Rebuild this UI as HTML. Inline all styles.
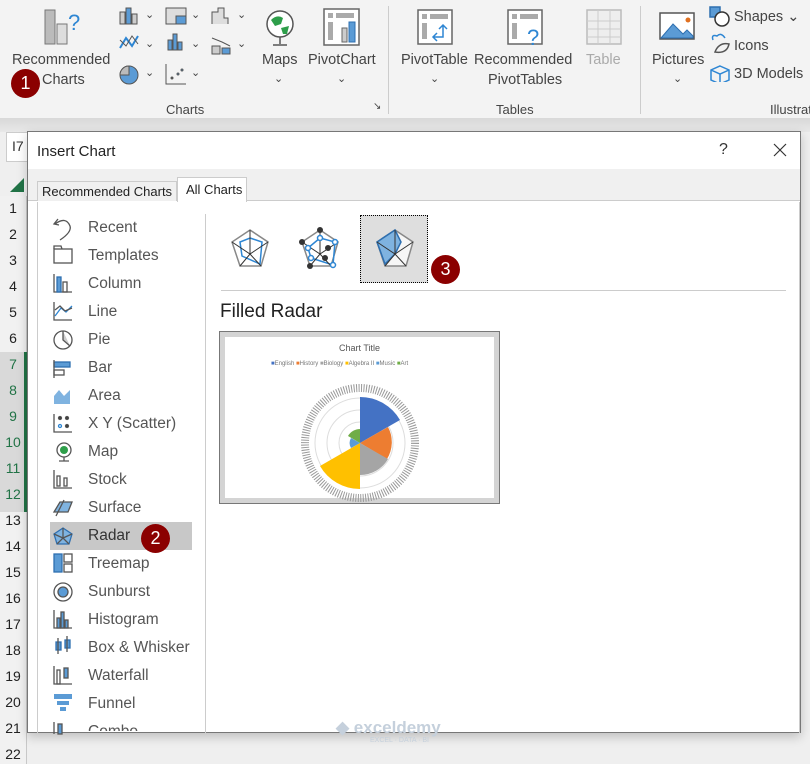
<!DOCTYPE html>
<html><head><meta charset="utf-8"><style>
*{margin:0;padding:0;box-sizing:border-box}
body{width:810px;height:764px;overflow:hidden;background:#efefef;font-family:"Segoe UI","Liberation Sans",sans-serif;position:relative;color:#333}
.a{position:absolute}
.rib{left:0;top:0;width:810px;height:120px;background:#f3f3f3}
.t{font-size:14.5px;color:#444;white-space:nowrap}
.badge{position:absolute;width:29px;height:29px;border-radius:50%;background:#8b0000;color:#fff;font-size:18px;text-align:center;line-height:29px}
.rows{left:0;top:196px;width:27px;height:568px;background:#f1f1f1;border-right:1px solid #c8c8c8}
.rn{position:absolute;left:0;width:26px;text-align:center;font-size:14px;color:#222}
.li{position:absolute;left:88px;font-size:15.5px;color:#555}
</style></head><body>
<div class="a rib"></div>
<div class="a" style="left:0;top:118px;width:810px;height:14px;background:linear-gradient(#d8d8d8,#e8e8e8)"></div>
<svg class="a" style="left:40px;top:8px" width="50" height="40"><rect x="5" y="2" width="10" height="34" fill="#bbb" stroke="#777"/><rect x="17" y="16" width="10" height="20" fill="#ddd" stroke="#777"/><text x="28" y="22" font-size="22" fill="#2e86d3" font-family="Liberation Sans">?</text></svg>
<div class="a t" style="left:12px;top:52px">Recommended</div>
<div class="a t" style="left:42px;top:72px">Charts</div>
<div class="badge" style="left:11px;top:69px">1</div>
<svg class="a" style="left:118px;top:6px" width="140" height="84" fill="none" stroke="#555">
<rect x="2" y="6" width="5" height="12" fill="#ccc"/><rect x="8" y="2" width="5" height="16" fill="#5b9bd5"/><rect x="14" y="8" width="5" height="10" fill="#ccc"/>
<polyline points="2,42 8,32 14,40 20,30" stroke="#2e86d3" stroke-width="2"/><polyline points="2,34 8,40 14,30 20,38" stroke="#555"/>
<circle cx="11" cy="69" r="9" fill="#5b9bd5"/><path d="M11 60 A9 9 0 0 0 2 69 L11 69Z" fill="#bbb"/>
<rect x="48" y="2" width="20" height="16" fill="#ddd"/><rect x="58" y="10" width="10" height="8" fill="#5b9bd5"/>
<rect x="50" y="34" width="4" height="10" fill="#5b9bd5"/><rect x="55" y="28" width="4" height="16" fill="#5b9bd5"/><rect x="60" y="36" width="4" height="8" fill="#5b9bd5"/>
<path d="M48 58 V78 H68"/><circle cx="54" cy="72" r="1" fill="#555"/><circle cx="60" cy="68" r="1" fill="#5b9bd5"/><circle cx="64" cy="64" r="1" fill="#5b9bd5"/>
<path d="M94 18 V6 H100 V2 H106 V12 H110 V18" fill="#ddd"/>
<rect x="94" y="40" width="8" height="8" fill="#ccc"/><rect x="104" y="42" width="8" height="6" fill="#5b9bd5"/><polyline points="94,32 104,36 112,40"/>
</svg>
<div class="a t" style="left:145px;top:8px;font-size:11px">⌄</div><div class="a t" style="left:191px;top:8px;font-size:11px">⌄</div><div class="a t" style="left:237px;top:8px;font-size:11px">⌄</div>
<div class="a t" style="left:145px;top:37px;font-size:11px">⌄</div><div class="a t" style="left:191px;top:37px;font-size:11px">⌄</div><div class="a t" style="left:237px;top:37px;font-size:11px">⌄</div>
<div class="a t" style="left:145px;top:66px;font-size:11px">⌄</div><div class="a t" style="left:191px;top:66px;font-size:11px">⌄</div>
<svg class="a" style="left:263px;top:8px" width="34" height="40"><circle cx="17" cy="16" r="13" fill="#fff" stroke="#555" stroke-width="1.5"/><path d="M8 12 Q14 6 20 10 L18 16 L12 18Z M18 20 L26 18 L24 26 L20 26Z" fill="#2e9e4a"/><path d="M17 29 V36 M10 37 H24" stroke="#555" stroke-width="1.5"/></svg>
<div class="a t" style="left:262px;top:52px">Maps</div><div class="a t" style="left:274px;top:72px;font-size:11px">⌄</div>
<svg class="a" style="left:323px;top:8px" width="38" height="40"><rect x="1" y="1" width="35" height="36" fill="#fff" stroke="#666" stroke-width="1.5"/><rect x="5" y="5" width="5" height="5" fill="#aaa"/><rect x="13" y="5" width="18" height="5" fill="#aaa"/><rect x="5" y="14" width="5" height="18" fill="#aaa"/><rect x="19" y="20" width="5" height="14" fill="#ccc" stroke="#666"/><rect x="26" y="14" width="6" height="20" fill="#5b9bd5" stroke="#2e6fb0"/></svg>
<div class="a t" style="left:308px;top:52px">PivotChart</div><div class="a t" style="left:337px;top:72px;font-size:11px">⌄</div>
<div class="a t" style="left:166px;top:102px;font-size:13px">Charts</div>
<div class="a t" style="left:373px;top:101px;font-size:10px">↘</div>
<div class="a" style="left:388px;top:6px;width:1px;height:108px;background:#ccc"></div>
<svg class="a" style="left:417px;top:9px" width="38" height="38"><rect x="1" y="1" width="34" height="34" fill="#fff" stroke="#666" stroke-width="1.5"/><rect x="5" y="5" width="5" height="5" fill="#aaa"/><rect x="13" y="5" width="18" height="5" fill="#aaa"/><rect x="5" y="14" width="5" height="16" fill="#aaa"/><path d="M16 28 H26 V16 M22 20 L26 16 L30 20 M20 24 L16 28 L20 32" stroke="#2e86d3" stroke-width="1.5" fill="none"/></svg>
<div class="a t" style="left:401px;top:52px">PivotTable</div><div class="a t" style="left:430px;top:72px;font-size:11px">⌄</div>
<svg class="a" style="left:507px;top:9px" width="40" height="38"><rect x="1" y="1" width="34" height="34" fill="#fff" stroke="#666" stroke-width="1.5"/><rect x="5" y="5" width="5" height="5" fill="#aaa"/><rect x="13" y="5" width="18" height="5" fill="#aaa"/><rect x="5" y="14" width="5" height="16" fill="#aaa"/><text x="20" y="36" font-size="22" fill="#2e86d3" font-family="Liberation Sans">?</text></svg>
<div class="a t" style="left:474px;top:52px">Recommended</div><div class="a t" style="left:488px;top:72px">PivotTables</div>
<svg class="a" style="left:586px;top:9px" width="38" height="36"><rect x="1" y="1" width="34" height="34" fill="#eee" stroke="#bbb" stroke-width="1.5"/><path d="M1 12 H35 M1 20 H35 M1 28 H35 M12 1 V35 M24 1 V35" stroke="#ccc"/></svg>
<div class="a t" style="left:586px;top:52px;color:#aaa">Table</div>
<div class="a t" style="left:496px;top:102px;font-size:13px">Tables</div>
<div class="a" style="left:640px;top:6px;width:1px;height:108px;background:#ccc"></div>
<svg class="a" style="left:659px;top:12px" width="38" height="30"><rect x="1" y="1" width="34" height="26" fill="#fff" stroke="#555" stroke-width="1.5"/><path d="M2 26 L14 12 L24 22 L28 18 L34 24 V26Z" fill="#5b9bd5" stroke="#2e6fb0"/><circle cx="29" cy="8" r="2.5" fill="#e07020"/></svg>
<div class="a t" style="left:652px;top:52px">Pictures</div><div class="a t" style="left:673px;top:72px;font-size:11px">⌄</div>
<svg class="a" style="left:709px;top:6px" width="24" height="76" fill="none" stroke-width="1.5"><rect x="1" y="1" width="10" height="10" fill="#5b9bd5" stroke="#2e6fb0"/><circle cx="13" cy="13" r="7" fill="#fff" stroke="#333"/><path d="M4 34 Q2 28 8 30 Q12 26 16 32" stroke="#2e86d3"/><path d="M6 46 Q10 36 20 38 Q18 48 6 46Z" stroke="#555"/><path d="M11 60 L20 64 V74 L11 78 L2 74 V64Z M2 64 L11 68 L20 64 M11 68 V78" stroke="#2e86d3"/></svg>
<div class="a t" style="left:734px;top:9px">Shapes ⌄</div>
<div class="a t" style="left:734px;top:38px">Icons</div>
<div class="a t" style="left:734px;top:66px">3D Models</div>
<div class="a t" style="left:770px;top:102px;font-size:13px">Illustrat</div>
<div class="a" style="left:6px;top:132px;width:24px;height:30px;background:#fff;border:1px solid #ccc;font-size:14px;padding:5px 0 0 5px">I7</div>
<div class="a" style="left:10px;top:178px;width:0;height:0;border-left:14px solid transparent;border-bottom:14px solid #217346"></div>
<div class="a rows">
<div class="a" style="left:24px;top:156px;width:3px;height:160px;background:#217346"></div>
<div class="a" style="left:0;top:156px;width:24px;height:160px;background:#d9d9d9"></div>
<div class="rn" style="top:4px">1</div><div class="rn" style="top:30px">2</div><div class="rn" style="top:56px">3</div><div class="rn" style="top:82px">4</div><div class="rn" style="top:108px">5</div><div class="rn" style="top:134px">6</div><div class="rn" style="top:160px;color:#217346">7</div><div class="rn" style="top:186px;color:#217346">8</div><div class="rn" style="top:212px;color:#217346">9</div><div class="rn" style="top:238px;color:#217346">10</div><div class="rn" style="top:264px;color:#217346">11</div><div class="rn" style="top:290px;color:#217346">12</div><div class="rn" style="top:316px">13</div><div class="rn" style="top:342px">14</div><div class="rn" style="top:368px">15</div><div class="rn" style="top:394px">16</div><div class="rn" style="top:420px">17</div><div class="rn" style="top:446px">18</div><div class="rn" style="top:472px">19</div><div class="rn" style="top:498px">20</div><div class="rn" style="top:524px">21</div><div class="rn" style="top:550px">22</div>
</div>
<div class="a" style="left:27px;top:131px;width:774px;height:602px;background:#fff;border:1px solid #777;box-shadow:0 4px 10px rgba(0,0,0,.2)">
<div class="a" style="left:9px;top:11px;font-size:15px;color:#222">Insert Chart</div>
<div class="a" style="left:691px;top:9px;font-size:16px;color:#333">?</div>
<svg class="a" style="left:745px;top:11px" width="14" height="14"><path d="M1 1 L13 13 M13 1 L1 13" stroke="#333" stroke-width="1.2"/></svg>
<div class="a" style="left:0;top:37px;width:772px;height:32px;background:#f0f0f0;border-bottom:1px solid #ccc"></div>
<div class="a" style="left:9px;top:49px;width:140px;height:20px;border:1px solid #ccc;border-bottom:none;background:#f0f0f0;font-size:13px;padding:2px 0 0 4px;color:#222">Recommended Charts</div>
<div class="a" style="left:149px;top:45px;width:70px;height:25px;border:1px solid #ccc;border-bottom:none;background:#fff;font-size:13px;padding:4px 0 0 8px;color:#222">All Charts</div>
<div class="a" style="left:9px;top:70px;width:763px;height:531px;border-left:1px solid #ccc;border-right:1px solid #ccc"></div>
<div class="a" style="left:177px;top:82px;width:1px;height:520px;background:#ccc"></div>
</div>
<div class="a" style="left:50px;top:522px;width:142px;height:28px;background:#c8c8c8"></div>
<svg class="a" style="left:52px;top:216px" width="26" height="520" fill="none" stroke="#555" stroke-width="1.3">
<path d="M6 3 L2 8 L7 9 M3 8 Q14 0 18 10 Q20 16 8 24"/>
<rect x="2" y="33" width="18" height="14"/><path d="M2 33 V30 H9 L10 33"/>
<path d="M2 58 V76 H20"/><rect x="5" y="61" width="4" height="15" fill="#5b9bd5" stroke="#2e6fb0"/><rect x="11" y="66" width="4" height="10"/>
<path d="M2 86 V104 H20"/><polyline points="3,100 9,92 14,96 20,90" stroke="#2e86d3"/><polyline points="3,94 8,90 13,95 20,92"/>
<circle cx="11" cy="124" r="9"/><path d="M11 115 V124 L18 130" fill="#ccc"/>
<rect x="2" y="146" width="16" height="5" fill="#5b9bd5" stroke="#2e6fb0"/><rect x="2" y="154" width="10" height="5"/><path d="M2 144 V162"/>
<path d="M2 180 L7 174 L12 180 L18 174 V188 H2Z" fill="#7fb3e0" stroke="none"/>
<path d="M2 198 V216 H20"/><circle cx="8" cy="202" r="1.5" fill="#333"/><circle cx="15" cy="202" r="1.5" fill="#333"/><circle cx="8" cy="210" r="1.5" stroke="#2e86d3"/><circle cx="15" cy="210" r="1.5" fill="#333"/>
<circle cx="12" cy="234" r="7"/><circle cx="12" cy="234" r="4" fill="#2e9e4a" stroke="none"/><path d="M12 241 V245 M7 245 H17"/>
<path d="M2 254 V272 H20"/><rect x="5" y="260" width="3" height="10"/><rect x="12" y="262" width="3" height="8"/>
<path d="M2 296 L8 286 H20 L16 296Z" fill="#7fb3e0"/><path d="M4 300 L12 284"/>
<path d="M11 312 L20 318 L17 328 H5 L2 318Z" fill="#7fb3e0" stroke="#2e6fb0"/><path d="M11 312 V322 M2 318 L11 322 L20 318 M5 328 L11 322 L17 328"/>
<rect x="2" y="338" width="8" height="18" fill="#5b9bd5" stroke="#2e6fb0"/><rect x="12" y="338" width="8" height="8"/><rect x="12" y="348" width="8" height="8"/>
<circle cx="11" cy="376" r="9"/><circle cx="11" cy="376" r="5" fill="#5b9bd5"/>
<path d="M2 394 V412 H20"/><rect x="5" y="402" width="3" height="10" fill="#5b9bd5"/><rect x="9" y="396" width="3" height="16" fill="#5b9bd5"/><rect x="13" y="404" width="3" height="8" fill="#5b9bd5"/>
<rect x="4" y="426" width="5" height="8" fill="#5b9bd5" stroke="#2e6fb0"/><rect x="13" y="424" width="5" height="8" fill="#5b9bd5" stroke="#2e6fb0"/><path d="M6 422 V438 M15 420 V436"/>
<path d="M2 450 V468 H20"/><rect x="5" y="454" width="3" height="14"/><rect x="12" y="452" width="4" height="10" fill="#5b9bd5"/>
<rect x="2" y="478" width="18" height="5" fill="#5b9bd5" stroke="none"/><rect x="5" y="485" width="12" height="4" fill="#5b9bd5" stroke="none"/><rect x="8" y="491" width="6" height="4" fill="#5b9bd5" stroke="none"/>
<path d="M2 506 V518"/><rect x="6" y="508" width="4" height="10" fill="#5b9bd5"/>
</svg>
<div class="li" style="top:219px">Recent</div><div class="li" style="top:247px">Templates</div><div class="li" style="top:275px">Column</div><div class="li" style="top:303px">Line</div><div class="li" style="top:331px">Pie</div><div class="li" style="top:359px">Bar</div><div class="li" style="top:387px">Area</div><div class="li" style="top:415px">X Y (Scatter)</div><div class="li" style="top:443px">Map</div><div class="li" style="top:471px">Stock</div><div class="li" style="top:499px">Surface</div><div class="li" style="top:527px;color:#333">Radar</div><div class="li" style="top:555px">Treemap</div><div class="li" style="top:583px">Sunburst</div><div class="li" style="top:611px">Histogram</div><div class="li" style="top:639px">Box &amp; Whisker</div><div class="li" style="top:667px">Waterfall</div><div class="li" style="top:695px">Funnel</div><div class="li" style="top:723px;height:8px;overflow:hidden">Combo</div>
<div class="badge" style="left:141px;top:524px">2</div>
<div class="a" style="left:360px;top:215px;width:68px;height:68px;background:#dedede;border:1px dotted #000"></div>
<svg class="a" style="left:226px;top:224px" width="210" height="60" fill="none">
<g stroke="#888" stroke-width="1.5"><path d="M24 6 L42 18 L35 42 L14 42 L6 18Z"/></g>
<path d="M24 14 L36 18 L34 40 L16 32 L14 18Z" stroke="#2e86d3" stroke-width="1.5"/>
<g stroke="#333"><path d="M24 6 V30 M6 18 L24 30 L42 18 M14 42 L24 30 L35 42"/></g>
<g transform="translate(70,0)"><path d="M24 6 L42 18 L35 42 L14 42 L6 18Z" stroke="#888" stroke-width="1.5"/><path d="M24 14 L39 18 L37 41 L15 34 L12 24Z" stroke="#2e86d3" stroke-width="1.5"/><path d="M24 6 V30 M6 18 L24 30 L42 18 M14 42 L24 30 L35 42" stroke="#333"/><g fill="#333"><circle cx="24" cy="6" r="3"/><circle cx="6" cy="18" r="3"/><circle cx="14" cy="42" r="3"/><circle cx="32" cy="24" r="3"/><circle cx="29" cy="34" r="3"/></g><g fill="#fff" stroke="#2e86d3" stroke-width="1.5"><circle cx="24" cy="14" r="2.5"/><circle cx="39" cy="18" r="2.5"/><circle cx="37" cy="41" r="2.5"/><circle cx="15" cy="34" r="2.5"/><circle cx="12" cy="24" r="2.5"/></g></g>
<g transform="translate(145,0)"><path d="M24 6 L42 18 L35 42 L14 42 L6 18Z" fill="#f6f6f6" stroke="#888" stroke-width="1.5"/><path d="M24 6 L30 18 L24 30 L14 40 L6 18Z" fill="#7fb3e0" stroke="#2e6fb0" stroke-width="1.5"/><path d="M24 6 V30 M6 18 L24 30 L42 18 M14 42 L24 30 L35 42" stroke="#333"/></g>
</svg>
<div class="badge" style="left:431px;top:255px">3</div>
<div class="a" style="left:221px;top:290px;width:565px;height:1px;background:#ccc"></div>
<div class="a" style="left:220px;top:301px;font-size:19px;color:#222">Filled Radar</div>
<div class="a" style="left:219px;top:331px;width:281px;height:173px;border:1px solid #777;background:#d4d4d4;padding:5px">
<div style="width:100%;height:100%;background:#fff;position:relative">
<div class="a" style="left:0;width:100%;top:6px;text-align:center;font-size:9px;color:#555">Chart Title</div>
<div class="a" style="left:46px;top:24px;font-size:6px;color:#777;white-space:nowrap"><span style="color:#4472c4">■</span>English <span style="color:#ed7d31">■</span>History <span style="color:#a5a5a5">■</span>Biology <span style="color:#ffc000">■</span>Algebra II <span style="color:#5b9bd5">■</span>Music <span style="color:#70ad47">■</span>Art</div>
<svg class="a" style="left:70px;top:40px" width="130" height="125">
<circle cx="65" cy="66" r="55" fill="none" stroke="#999" stroke-width="8" stroke-dasharray="1 1.5"/>
<circle cx="65" cy="66" r="45" fill="none" stroke="#ddd"/><circle cx="65" cy="66" r="33" fill="none" stroke="#ddd"/><circle cx="65" cy="66" r="21" fill="none" stroke="#ddd"/>
<path d="M65 66 V20 A46 46 0 0 1 105 43Z" fill="#4472c4"/>
<path d="M65 66 L93 50 A32 32 0 0 1 92 82Z" fill="#ed7d31"/>
<path d="M65 66 L93 82 A32 32 0 0 1 65 98Z" fill="#a5a5a5"/>
<path d="M65 66 V112 A46 46 0 0 1 25 89Z" fill="#ffc000"/>
<path d="M65 66 L56 71 A10 10 0 0 1 56 61Z" fill="#5b9bd5"/>
<path d="M65 66 L53 59 A14 14 0 0 1 65 52Z" fill="#70ad47"/>
</svg>
</div></div>
<div class="a" style="left:336px;top:718px;font-size:17px;color:#c5d0dc;font-weight:bold">◆ exceldemy</div>
<div class="a" style="left:370px;top:737px;font-size:7px;color:#c5d0dc">EXCEL · DATA · BI</div>
</body></html>
